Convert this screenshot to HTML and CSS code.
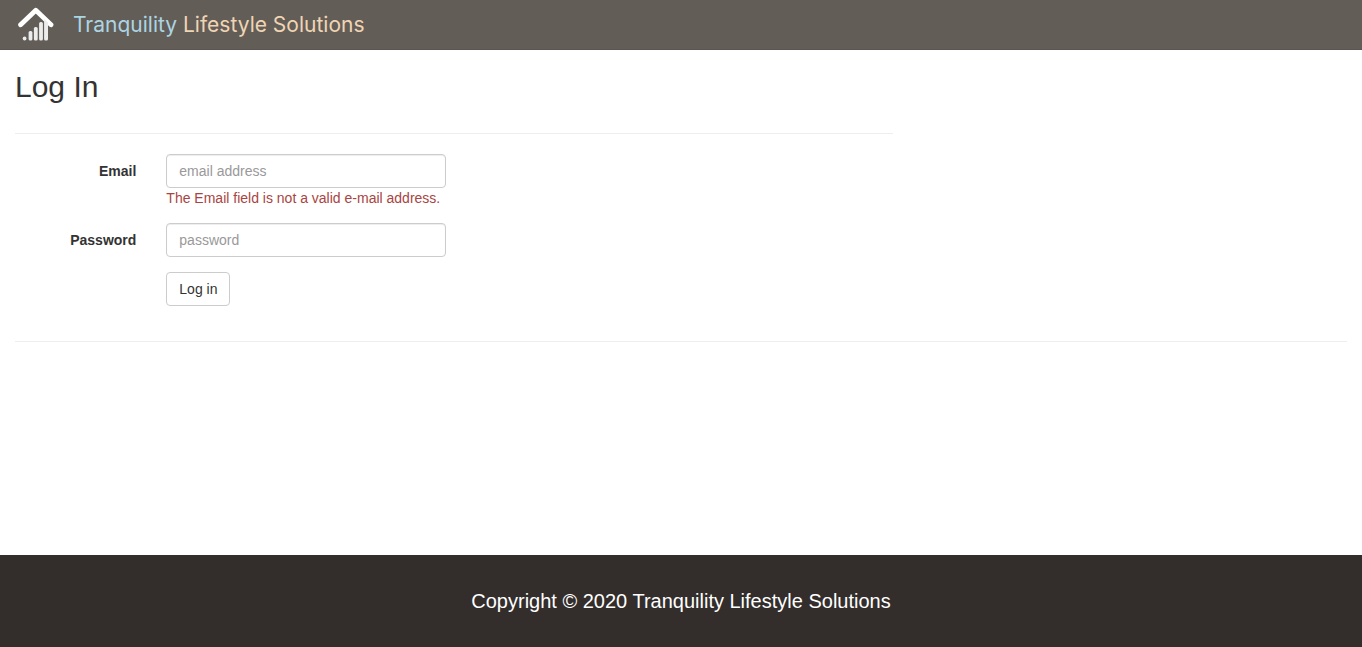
FILE: index.html
```html
<!DOCTYPE html>
<html lang="en">
<head>
<meta charset="utf-8">
<meta name="viewport" content="width=device-width, initial-scale=1">
<title>Log In - Tranquility Lifestyle Solutions</title>
<link rel="stylesheet" href="styles.css">
</head>
<body>
<header class="navbar">
  <a class="brand" href="#">
    <svg class="brand-icon" width="38" height="36" viewBox="0 0 38 36" aria-hidden="true">
      <path d="M3.6 17.8 18.8 3.2 34 17.8" fill="none" stroke="#fff" stroke-width="4.8" stroke-linecap="round" stroke-linejoin="round"/>
      <g fill="#ececec">
        <circle cx="7.6" cy="31.5" r="1.9"/>
        <rect x="11.6" y="24" width="3.8" height="9.5" rx="1.5"/>
        <rect x="16.9" y="20" width="3.8" height="13.5" rx="1.5"/>
        <rect x="22.1" y="15" width="3.8" height="18.5" rx="1.5"/>
        <path d="M27.1 12 31 15.5V32a1.5 1.5 0 0 1-1.5 1.5h-.9a1.5 1.5 0 0 1-1.5-1.5Z"/>
      </g>
    </svg>
    <span class="brand-name"><span class="brand-first">Tranquility</span> Lifestyle Solutions</span>
  </a>
</header>
<main class="content">
  <section class="login">
    <h2 class="title">Log In</h2>
    <hr class="rule">
    <form class="form" novalidate>
      <div class="form-group">
        <label class="label" for="email">Email</label>
        <div class="field">
          <input class="control" id="email" type="email" placeholder="email address" aria-describedby="email-error">
          <span class="error" id="email-error">The Email field is not a valid e-mail address.</span>
        </div>
      </div>
      <div class="form-group">
        <label class="label" for="password">Password</label>
        <div class="field">
          <input class="control" id="password" type="password" placeholder="password">
        </div>
      </div>
      <div class="form-group">
        <div class="field field-offset">
          <button class="button" type="submit">Log in</button>
        </div>
      </div>
    </form>
  </section>
  <hr class="rule">
</main>
<footer class="footer">Copyright © 2020 Tranquility Lifestyle Solutions</footer>
</body>
</html>
```
FILE: styles.css
```css
* {
  box-sizing: border-box;
}

body {
  display: flex;
  flex-direction: column;
  min-height: 100vh;
  margin: 0;
  background: #fff;
  color: #333;
  font: 14px/20px "Liberation Sans", Arial, sans-serif;
}

.navbar {
  display: flex;
  height: 50px;
  padding: 0 17px;
  background: #635d58;
  border-bottom: 1px solid #5b5551;
}

.brand {
  display: flex;
  align-items: center;
  gap: 18px;
  color: #f0d5b4;
  text-decoration: none;
}

.brand-name {
  font: 21px/28px Inter, sans-serif;
}

.brand-first {
  color: #acd5e3;
}

.content {
  flex: 1;
  padding: 0 15px;
}

.login {
  display: flow-root;
  width: calc(66.6667% + 5px);
}

.title {
  margin: 0;
  padding: 20px 0 10px;
  font-size: 30px;
  font-weight: 400;
  line-height: 33px;
}

.rule {
  margin: 20px 0;
  border: 0;
  border-top: 1px solid #eee;
}

.login .rule {
  margin-right: 15px;
}

.form {
  margin-left: -15px;
}

.form-group {
  display: flex;
  margin-bottom: 15px;
}

.label {
  width: 16.6667%;
  padding: 7px 15px 0;
  font-weight: 700;
  text-align: right;
}

.field {
  flex: 1;
  padding: 0 15px;
}

.field-offset {
  margin-left: 16.6667%;
}

.control {
  display: block;
  width: 100%;
  max-width: 280px;
  height: 34px;
  padding: 6px 12px;
  border: 1px solid #ccc;
  border-radius: 4px;
  background: #fff;
  box-shadow: inset 0 1px 1px rgba(0, 0, 0, 0.075);
  color: #555;
  font: inherit;
}

.control::placeholder {
  color: #999;
  opacity: 1;
}

.error {
  display: block;
  color: #a94442;
}

.button {
  display: block;
  height: 34px;
  padding: 6px 12px;
  border: 1px solid #ccc;
  border-radius: 4px;
  background: #fff;
  color: #333;
  font: inherit;
  cursor: pointer;
}

.footer {
  padding: 32px 15px;
  background: #332d2b;
  color: #fff;
  font-size: 20px;
  line-height: 28px;
  text-align: center;
}
```
